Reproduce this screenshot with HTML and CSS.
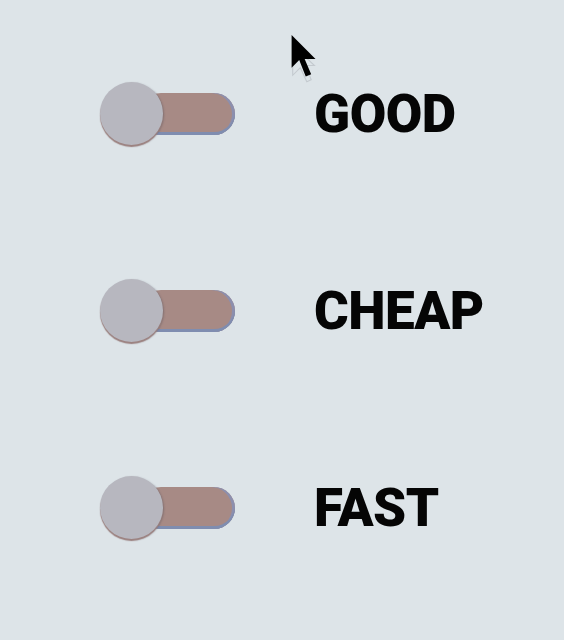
FILE: index.html
```html
<!DOCTYPE html>
<html lang="en">
<head>
<meta charset="utf-8">
<title>Good Cheap Fast</title>
<link rel="stylesheet" href="styles.css">
</head>
<body>
<main class="list">
  <div class="row">
    <div class="toggle"><span class="track"></span><span class="knob"></span></div>
    <span class="label">GOOD</span>
  </div>
  <div class="row">
    <div class="toggle"><span class="track"></span><span class="knob"></span></div>
    <span class="label">CHEAP</span>
  </div>
  <div class="row">
    <div class="toggle"><span class="track"></span><span class="knob"></span></div>
    <span class="label">FAST</span>
  </div>
</main>
<svg class="cursor" width="38" height="50" viewBox="0 0 34 46" aria-hidden="true">
  <polygon class="ghost" points="2,10 2,38 9,31 15,44 19,42 14,29 22,29" />
  <polygon class="arrow" points="1,1 1,31 8,24 14,39 19,37 13,23 23,23" />
</svg>
</body>
</html>
```

FILE: styles.css
```css
html, body {
  margin: 0;
  padding: 0;
}
body {
  background: #dde4e8;
  width: 564px;
  height: 640px;
  overflow: hidden;
  position: relative;
  font-family: Roboto, "Liberation Sans", sans-serif;
}
.list {
  display: flex;
  flex-direction: column;
  gap: 133px;
  padding-top: 82px;
  padding-left: 100px;
}
.row {
  display: flex;
  align-items: center;
  gap: 79px;
  height: 64px;
}
.toggle {
  position: relative;
  width: 135px;
  height: 64px;
  flex: none;
}
.track {
  position: absolute;
  left: 40px;
  top: 11px;
  width: 95px;
  height: 42px;
  border-radius: 21px;
  background: #a78a85;
  box-shadow: inset 0 -3px 0 #7f8db0, inset -3px 0 0 #8c8fae;
}
.knob {
  position: absolute;
  left: 0;
  top: 0;
  width: 63px;
  height: 63px;
  border-radius: 50%;
  background: #b7b7bf;
  box-shadow: 0 2px 1px #9c8280, 1px 1px 2px rgba(70, 70, 80, 0.4);
}
.label {
  font-size: 53px;
  line-height: 64px;
  font-weight: 900;
  color: #050505;
  letter-spacing: -0.5px;
}
.cursor {
  position: absolute;
  left: 290px;
  top: 34px;
}
.cursor .arrow {
  fill: #000;
}
.cursor .ghost {
  fill: none;
  stroke: #c4cacf;
  stroke-width: 1;
}
```
